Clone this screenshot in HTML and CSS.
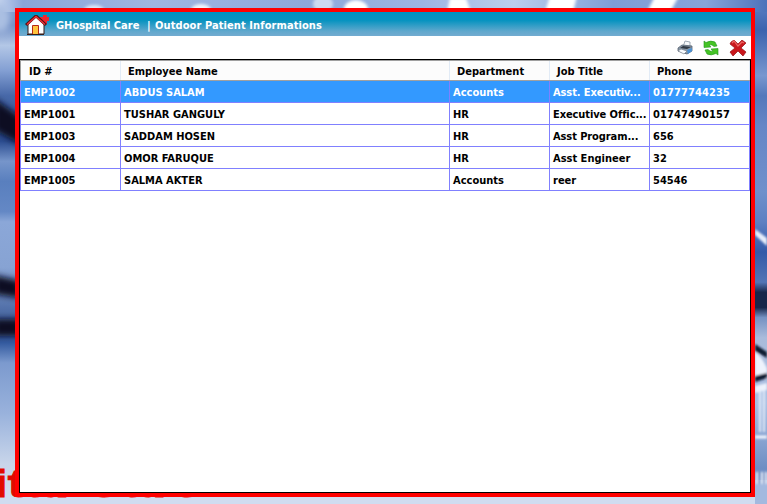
FILE: index.html
```html
<!DOCTYPE html>
<html lang="en">
<head>
<meta charset="utf-8">
<title>GHospital Care</title>
<link rel="stylesheet" href="styles.css">
</head>
<body>
<svg class="backdrop" width="767" height="504" viewBox="0 0 767 504" aria-hidden="true">
  <defs>
    <linearGradient id="left" x1="0" y1="0" x2="0" y2="1">
      <stop offset="0" stop-color="#86a3d4"/><stop offset=".05" stop-color="#7390c6"/>
      <stop offset=".09" stop-color="#b3c7e6"/><stop offset=".14" stop-color="#839fd3"/>
      <stop offset=".19" stop-color="#4768a8"/><stop offset=".28" stop-color="#2b4c90"/>
      <stop offset=".32" stop-color="#7695ca"/><stop offset=".36" stop-color="#597fbe"/>
      <stop offset=".42" stop-color="#6488c5"/><stop offset=".44" stop-color="#8ba7d8"/>
      <stop offset=".53" stop-color="#87a3d3"/><stop offset=".64" stop-color="#405f9b"/>
      <stop offset=".68" stop-color="#335a9f"/><stop offset=".72" stop-color="#7c9ace"/>
      <stop offset=".82" stop-color="#99b2dc"/><stop offset=".92" stop-color="#c8d5ea"/><stop offset="1" stop-color="#d6e0f1"/>
    </linearGradient>
    <linearGradient id="right" x1="0" y1="0" x2="0" y2="1">
      <stop offset="0" stop-color="#5f82c6"/><stop offset=".06" stop-color="#3c63ae"/>
      <stop offset=".15" stop-color="#7897cf"/><stop offset=".19" stop-color="#5378bb"/>
      <stop offset=".25" stop-color="#6586c6"/><stop offset=".38" stop-color="#6f90cb"/>
      <stop offset=".44" stop-color="#5e80c2"/><stop offset=".5" stop-color="#335aa8"/>
      <stop offset=".56" stop-color="#5275b5"/><stop offset=".58" stop-color="#17264a"/>
      <stop offset=".61" stop-color="#17264a"/><stop offset=".63" stop-color="#7591c2"/>
      <stop offset=".67" stop-color="#a9bbdb"/><stop offset=".8" stop-color="#a9bfe2"/>
      <stop offset=".93" stop-color="#6e8dc3"/><stop offset="1" stop-color="#b9cae7"/>
    </linearGradient>
    <linearGradient id="top">
      <stop offset="0" stop-color="#c0d0ec"/><stop offset=".03" stop-color="#8aa5d8"/>
      <stop offset=".2" stop-color="#a0b6e0"/><stop offset=".4" stop-color="#8ea8db"/>
      <stop offset=".55" stop-color="#9db5e2"/><stop offset=".67" stop-color="#bccdec"/>
      <stop offset=".8" stop-color="#7f9dd6"/><stop offset=".92" stop-color="#88a4d9"/><stop offset="1" stop-color="#4c72ba"/>
    </linearGradient>
    <filter id="soft" x="-20%" y="-50%" width="140%" height="200%"><feGaussianBlur stdDeviation="3"/></filter>
    <filter id="glow" x="-5%" y="-100%" width="110%" height="300%"><feGaussianBlur stdDeviation="1.500"/></filter>
    <filter id="edge"><feGaussianBlur stdDeviation="1"/></filter>
  </defs>
  <rect width="400" height="504" fill="url(#left)"/>
  <rect x="400" width="367" height="504" fill="url(#right)"/>
  <rect width="767" height="12" fill="url(#top)"/>
  <rect y="488" width="767" height="16" fill="#d0dcf0"/>
  <rect x="755" y="480" width="12" height="24" fill="#a3b9df"/>
  <g filter="url(#soft)">
    <ellipse cx="0" cy="18" rx="10" ry="14" fill="#aabfe2"/>
    <path d="M-6 98L22 118V145L-6 130ZM-6 275L20 281V298L-6 294ZM-6 319H22V336H-6Z" fill="#071020"/>
  </g>
  <g filter="url(#glow)">
    <ellipse cx="94" cy="10" rx="10" ry="5" fill="#dce6f7"/>
    <ellipse cx="201" cy="10" rx="10" ry="6" fill="#eff4fc"/>
    <ellipse cx="323" cy="4" rx="10" ry="8" fill="#cddaf1"/>
    <ellipse cx="356" cy="9" rx="12" ry="9" fill="#fff"/>
    <path d="M447 12L450 -2H466L471 12ZM545 12L550 -4H577L573 12ZM647 12L655 -4H679L670 12Z" fill="#fff"/>
  </g>
  <g filter="url(#edge)">
    <path d="M755 229L767 238V246L755 235Z" fill="#e6eefb"/>
    <path d="M755 352Q762 357 767 368V379L755 376Z" fill="#edf3fd"/>
    <path d="M755 344L767 352V358L755 351ZM755 376L767 373V378L755 382Z" fill="#101a32"/>
    <path d="M755 386L767 383V390L755 393Z" fill="#edf3fd"/>
    <path d="M760 390V432M764 390V432M757 472V484M762 472V484M766 472V484" stroke="#e5edfa" stroke-width="2"/>
    <path d="M755 437H767" stroke="#f3f7ff" stroke-width="3"/>
    <path d="M759 472V484M764 472V484" stroke="#456baa" stroke-width="1"/>
  </g>
  <text class="brand" x="-7" y="496.5" textLength="209" lengthAdjust="spacingAndGlyphs">ital Care</text>
</svg>
<main class="window">
  <header class="titlebar">
    <svg class="home" width="24" height="21" viewBox="0 0 24 21">
      <path d="M15 2h3V0h4v2h2v4h-2v3h-4V6h-3z" fill="#ee2530"/>
      <path d="M3 9L11 2L19 9V19H3Z" fill="#fff" stroke="#321b17"/>
      <path d="M1 10L11 1L21 10" fill="none" stroke="#551010" stroke-width="3"/>
      <path d="M2 9.5L11 1.5L20 9.5" fill="none" stroke="#ed3037" stroke-width="1.5"/>
      <path d="M7.5 19V10.500H13.500V19" fill="#ffc43d" stroke="#b52a17"/>
      <path d="M2 19.500H19" stroke="#381d17"/>
    </svg>
    <span class="app">GHospital Care</span><span class="bar">|</span><span class="screen">Outdoor Patient Informations</span>
  </header>
  <div class="toolbar">
    <svg width="16" height="16" viewBox="0 0 16 16">
      <path d="M6 7L8 1L13 2L13 8Z" fill="#f6f9fb" stroke="#8996a3" stroke-width=".8"/>
      <path d="M1 8L5 5L15 6V11L10 14L1 11Z" fill="#8796a6" stroke="#56616e" stroke-width=".8"/>
      <path d="M3 8L6 6L14 7L10 9Z" fill="#303943"/>
      <path d="M1 11L4 9L10 11L7 14Z" fill="#f8fbfe" stroke="#78818c" stroke-width=".7"/>
      <path d="M10 10L15 8V11L11 14Z" fill="#4a91d4"/>
    </svg>
    <svg width="16" height="16" viewBox="0 0 16 16">
      <g id="arrow"><path d="M1 7.500V1L3 2.500Q8 0 12 2L14 6L11 6.500Q9 4 6 5L8 7Z" fill="#45c425" stroke="#249620" stroke-width=".6"/></g>
      <use href="#arrow" transform="rotate(180 8 8)"/>
    </svg>
    <svg width="18" height="16" viewBox="0 0 18 16">
      <path d="M2 2L5 0L9 4L13 0L17 3L12 8L17 12L14 16L9 11L4 16L1 12L6 8L1 4Z" fill="#ca171c" stroke="#931015" stroke-width=".7"/>
      <path d="M3 3L5 1L9 6L13 2L15 3" fill="none" stroke="#ec6764" stroke-width="1.200"/>
    </svg>
  </div>
  <section class="grid">
    <div class="row head"><span>ID #</span><span>Employee Name</span><span>Department</span><span>Job Title</span><span>Phone</span></div>
    <div class="row selected"><span>EMP1002</span><span>ABDUS SALAM</span><span>Accounts</span><span class="cut">Asst. Executiv...</span><span class="number">01777744235</span></div>
    <div class="row"><span>EMP1001</span><span>TUSHAR GANGULY</span><span>HR</span><span class="cut">Executive Offic...</span><span class="number">01747490157</span></div>
    <div class="row"><span>EMP1003</span><span>SADDAM HOSEN</span><span>HR</span><span class="cut">Asst Program...</span><span>656</span></div>
    <div class="row"><span>EMP1004</span><span>OMOR FARUQUE</span><span>HR</span><span>Asst Engineer</span><span>32</span></div>
    <div class="row"><span>EMP1005</span><span>SALMA AKTER</span><span>Accounts</span><span>reer</span><span>54546</span></div>
  </section>
</main>
</body>
</html>
```
FILE: styles.css
```css
* { box-sizing: border-box; }
body {
  margin: 0;
  width: 767px;
  height: 504px;
  overflow: hidden;
  padding: 8px 12px 7px 15px;
  font: bold 11px/14px "DejaVu Sans Condensed", "DejaVu Sans", sans-serif;
  font-stretch: condensed;
  color: #000;
}
.backdrop { position: absolute; left: 0; top: 0; z-index: -1; }
.brand { font: bold 39px "Liberation Sans", sans-serif; fill: #e20a00; stroke: #e20a00; }
.window {
  width: 740px;
  height: 489px;
  border: 4px solid #f00;
  background: #fff;
  display: flex;
  flex-direction: column;
}
.titlebar {
  height: 24px;
  flex: none;
  display: flex;
  align-items: center;
  padding: 2px 0 0 6px;
  background: linear-gradient(#0091c0, #0793c0 35%, #60a8cd 80%, #73abd0);
  color: #fff;
}
.titlebar span { padding-top: 2px; }
.home { margin-right: 7px; }
.app { width: 91px; }
.bar { width: 8px; }
.screen { letter-spacing: .09px; }
.toolbar {
  height: 23px;
  flex: none;
  display: flex;
  align-items: center;
  justify-content: flex-end;
  gap: 10px;
  padding: 1px 4px 0 0;
}
.grid { flex: 1; border: 1px solid #000; }
.row {
  display: grid;
  grid-template-columns: 101px 329px 100px 100px 100px;
  grid-template-rows: 100%;
  height: 22px;
  line-height: 21px;
}
.row span {
  border-right: 1px solid #8080ff;
  border-bottom: 1px solid #8080ff;
  padding: 1px 0 0 3px;
  white-space: nowrap;
}
.row span:first-child { border-left: 1px solid #8080ff; }
.row .cut { letter-spacing: -.09px; }
.row .number { letter-spacing: .12px; }
.selected { background: #39f; color: #fff; }
.head {
  height: 21px;
  background: #fcfcfc;
  border: 1px solid #a0a0a0;
  border-right: 0;
  grid-template-columns: 100px 329px 100px 100px 100px;
  line-height: 20px;
}
.head span { border-bottom: 0; border-right-color: #e2ebf6; padding-left: 7px; }
.head span:first-child { border-left: 0; padding-left: 8px; }
```
